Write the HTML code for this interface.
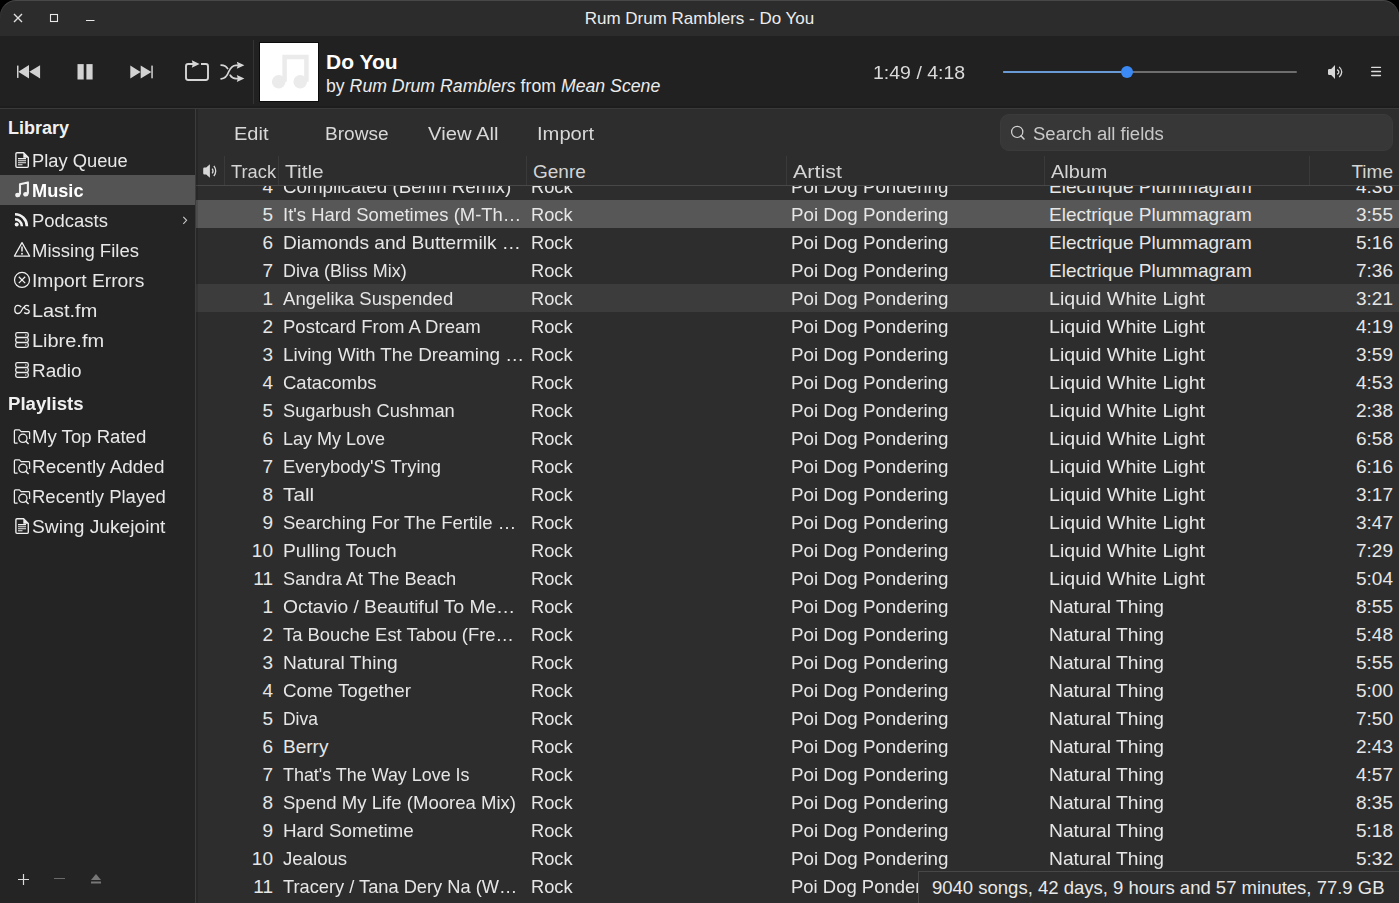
<!DOCTYPE html>
<html><head><meta charset="utf-8">
<style>
*{box-sizing:border-box;margin:0;padding:0}
html,body{width:1399px;height:903px;overflow:hidden;background:#000;font-family:"Liberation Sans",sans-serif;color:#e8e8e8}
#win{position:absolute;left:0;top:0;width:1399px;height:903px;background:#2d2d2d;border-radius:16px 16px 0 0;overflow:hidden}
#title{position:absolute;left:0;top:0;width:1399px;height:36px;background:#2c2c2c}
#tline{position:absolute;left:0;top:0;width:1399px;height:24px;border-top:1px solid #484848;border-left:1px solid #383838;border-right:1px solid #383838;border-radius:16px 16px 0 0;-webkit-mask-image:linear-gradient(#000 10px,transparent 20px)}
#title .t{position:absolute;left:0;width:1399px;top:9px;text-align:center;font-size:17px;color:#ececec}
#toolbar{position:absolute;left:0;top:36px;width:1399px;height:72px;background:#212121;border-bottom:2px solid #1d1d1d}
#tbline{position:absolute;left:0;top:108px;width:1399px;height:1px;background:#3a3a3a}
#side{position:absolute;left:0;top:109px;width:195px;height:794px;background:#242424}
#vsep{position:absolute;left:195px;top:109px;width:1px;height:794px;background:#3c3c3c}
.abs{position:absolute}
.sh{position:absolute;left:8px;margin-top:1px;font-weight:bold;font-size:18px;color:#f0f0f0}
.si{position:absolute;left:0;width:195px;height:30px}
.si .lbl{position:absolute;left:32px;top:6px;transform-origin:0 0;font-size:18px;color:#e8e8e8;white-space:nowrap}
.si svg{position:absolute;left:14px;top:7px}
.si.sel{background:#545454}
.si.sel .lbl{font-weight:bold;color:#fff}
#main{position:absolute;left:196px;top:109px;width:1203px;height:794px;background:#2d2d2d;overflow:hidden}
.btn{position:absolute;top:15px;font-size:18px;color:#d8d8d8;transform-origin:0 0}
#search{position:absolute;left:804px;top:5px;width:393px;height:37px;background:#373737;border:1px solid #3b3b3b;border-radius:9px}
#search .ph{position:absolute;left:32px;top:9px;font-size:18px;color:#c8c8c8}
#hdr{position:absolute;left:0;top:47px;width:1203px;height:30px;border-bottom:1px solid #484848}
.hs{position:absolute;top:0;width:1px;height:29px;background:#3a3a3a}
.hl{position:absolute;top:5px;font-size:19px;color:#d4d4d4;white-space:nowrap;transform-origin:0 0}
#list{position:absolute;left:196px;top:186px;width:1203px;height:717px;overflow:hidden}
.row{position:absolute;left:0;width:1203px;height:28px;font-size:19px;line-height:28px;white-space:nowrap;color:#e6e6e6}
#list .row{margin-top:-186px}
.row.sel{background:#575757}
.row.hov{background:#3c3c3c}
.c{position:absolute;top:1px;transform-origin:0 0}
.tr{left:0;width:77px;text-align:right}
.ti{left:87px}
.ge{left:335px}
.ar{left:595px}
.al{left:853px}
.tm{left:1100px;width:97px;text-align:right}
#status{position:absolute;left:918px;top:871px;width:481px;height:32px;background:#2d2d2d;border:1px solid #474747;border-right:none;border-bottom:none}
#status .t{position:absolute;left:13px;top:5px;font-size:18.5px;color:#e8e8e8;white-space:nowrap}
</style></head><body>
<div id="win">
 <div id="title">
  <svg class="abs" style="left:13px;top:13px" width="10" height="10" viewBox="0 0 10 10"><path d="M1 1L9 9M9 1L1 9" stroke="#e0e0e0" stroke-width="1.4"/></svg>
  <svg class="abs" style="left:49px;top:13px" width="10" height="10" viewBox="0 0 10 10"><rect x="1.5" y="1.5" width="7" height="7" fill="none" stroke="#e8e8e8" stroke-width="1.1"/></svg>
  <svg class="abs" style="left:85px;top:18px" width="10" height="4" viewBox="0 0 10 4"><path d="M1 2.5H9.5" stroke="#e8e8e8" stroke-width="1.1"/></svg>
  <div class="t">Rum Drum Ramblers - Do You</div>
  <div id="tline"></div>
 </div>
 <div id="toolbar">
  <!-- prev/pause/next -->
  <svg class="abs" style="left:10px;top:22px" width="150" height="30" viewBox="10 58 150 30">
   <rect x="17" y="65.6" width="1.5" height="12.3" fill="#d2d2d2"/>
   <path d="M18.3 71.8L29 65.1V78.6Z M29.3 71.8L40.1 65.2V78.4Z" fill="#d2d2d2"/>
   <rect x="77.5" y="64.1" width="6.2" height="15.4" fill="#d2d2d2"/>
   <rect x="86.4" y="64.1" width="6.2" height="15.4" fill="#d2d2d2"/>
   <path d="M130.3 65.6L140.6 72L130.3 78.4Z M140.7 65.6L151.4 72L140.7 78.4Z" fill="#d2d2d2"/>
   <rect x="151.3" y="65.6" width="1.5" height="12.7" fill="#d2d2d2"/>
  </svg>
  <!-- repeat + shuffle -->
  <svg class="abs" style="left:180px;top:19px" width="70" height="35" viewBox="180 55 70 35">
   <path d="M193.5 64H188.2Q186 64 186 66.2V77.8Q186 80 188.2 80H205.8Q208 80 208 77.8V66.2Q208 64 205.8 64H201" fill="none" stroke="#d6d6d6" stroke-width="1.9"/>
   <path d="M191.8 60.2L199.6 64L191.8 67.8L192.8 64Z" fill="#d6d6d6"/>
   <path d="M221.1 65.1Q225.6 65.1 227.6 68.6" fill="none" stroke="#d6d6d6" stroke-width="1.7" stroke-linecap="round"/>
   <path d="M221.1 78.8Q226.2 78.8 228.8 71.5Q231.5 65.3 236 65.3H239" fill="none" stroke="#d6d6d6" stroke-width="1.7" stroke-linecap="round"/>
   <path d="M230.2 75.2Q232.3 78.6 236 78.6H239" fill="none" stroke="#d6d6d6" stroke-width="1.7" stroke-linecap="round"/>
   <path d="M236.8 61.8L244.4 65.3L236.8 68.8L237.8 65.3Z M236.8 75.1L244.4 78.6L236.8 82.1L237.8 78.6Z" fill="#d6d6d6"/>
  </svg>
  <div class="abs" style="left:253px;top:4px;width:1px;height:64px;background:#343434"></div>
  <!-- art -->
  <div class="abs" style="left:259px;top:6px;width:60px;height:60px;background:#0c0c0c"></div>
  <div class="abs" style="left:260px;top:7px;width:58px;height:58px;background:#fff">
   <svg class="abs" style="left:0;top:0" width="58" height="58" viewBox="0 0 58 58"><path d="M24.6 38.8V13.9H46.4V38.8" fill="none" stroke="#ebebeb" stroke-width="4.5"/><circle cx="18.7" cy="38.8" r="6.8" fill="#ebebeb"/><circle cx="40.2" cy="38.8" r="6.8" fill="#ebebeb"/></svg>
  </div>
  <div class="abs" style="left:326px;top:14px;font-size:21px;font-weight:bold;color:#fff">Do You</div>
  <div class="abs" style="left:326px;top:40px;font-size:17.7px;color:#ececec;white-space:nowrap">by <i>Rum Drum Ramblers</i> from <i>Mean Scene</i></div>
  <div class="abs" style="left:873px;top:27px;font-size:18px;color:#dadada;transform:scaleX(1.084);transform-origin:0 0">1:49 / 4:18</div>
  <!-- slider -->
  <div class="abs" style="left:1003px;top:35px;width:294px;height:2px;background:#6e6e6e;border-radius:1px"></div>
  <div class="abs" style="left:1003px;top:35px;width:124px;height:2px;background:#6a9ad6;border-radius:1px"></div>
  <div class="abs" style="left:1121px;top:30px;width:12px;height:12px;background:#3a89f5;border-radius:6px"></div>
  <!-- volume -->
  <svg class="abs" style="left:1327px;top:28px" width="16" height="16" viewBox="0 0 16 16"><path d="M1 6.2Q1 4.9 2.3 4.9H4.2L8 1V15L4.2 11.1H2.3Q1 11.1 1 9.8Z" fill="#d6d6d6"/><path d="M10.2 5.6Q13.6 8 10.2 10.4M12.2 2.9Q17.2 8 12.2 13.1" fill="none" stroke="#d6d6d6" stroke-width="1.3"/></svg>
  <!-- menu -->
  <svg class="abs" style="left:1370px;top:30px" width="12" height="11" viewBox="0 0 12 11"><path d="M1.7 1.4H10.5M1.7 5.5H10.5M1.7 9.5H10.5" stroke="#dcdcdc" stroke-width="1.3" stroke-linecap="round"/></svg>
 </div>
 <div id="tbline"></div>
 <div id="side">
  <div class="sh" style="top:8px">Library</div>
  <div class="si" style="top:36px"><svg style="position:absolute;left:13px;top:6px" width="18" height="18" viewBox="0 0 18 18"><path d="M4 1.7H10.6L15.3 6.4V15.3Q15.3 16.3 14.3 16.3H4Q2.9 16.3 2.9 15.3V2.7Q2.9 1.7 4 1.7Z" fill="none" stroke="#f0f0f0" stroke-width="1.35" stroke-linejoin="round"/><path d="M10.3 1.7V6.7H15.3Z" fill="#f0f0f0"/><path d="M5 7.6H13M5 9.7H13M5 11.7H13M5 13.7H9.5" stroke="#f0f0f0" stroke-width="1.15"/></svg><span class="lbl" style="margin-top:0px;transform:scaleX(1.018)">Play Queue</span></div>
<div class="si sel" style="top:66px"><svg style="position:absolute;left:13px;top:6px" width="18" height="18" viewBox="0 0 18 18"><path d="M7 13.5V3.3L14.9 1.4V12.8" fill="none" stroke="#f0f0f0" stroke-width="2.1" stroke-linejoin="round"/><ellipse cx="4.8" cy="14" rx="2.6" ry="2.3" fill="#f0f0f0"/><ellipse cx="12.8" cy="13.2" rx="2.6" ry="2.3" fill="#f0f0f0"/></svg><span class="lbl" style="margin-top:0px;transform:scaleX(1.01)">Music</span></div>
<div class="si" style="top:96px"><svg style="position:absolute;left:13px;top:6px" width="18" height="18" viewBox="0 0 18 18"><circle cx="3.7" cy="13.6" r="2" fill="#f0f0f0"/><path d="M2 8.3A6.9 6.9 0 0 1 8.9 15.2M2 3.3A11.9 11.9 0 0 1 13.9 15.2" fill="none" stroke="#f0f0f0" stroke-width="2.6"/></svg><span class="lbl" style="margin-top:0px;transform:scaleX(1.026)">Podcasts</span><svg class="abs" style="left:182px;top:11px" width="6" height="9" viewBox="0 0 6 9"><path d="M1.3 0.8L4.6 4.3L1.3 7.8" fill="none" stroke="#c8c8c8" stroke-width="1.1"/></svg></div>
<div class="si" style="top:126px"><svg style="position:absolute;left:13px;top:6px" width="18" height="18" viewBox="0 0 18 18"><path d="M9 1.6L16.6 15.1H1.4Z" fill="none" stroke="#f0f0f0" stroke-width="1.25" stroke-linejoin="round"/><path d="M9 5.6V10.6" stroke="#f0f0f0" stroke-width="1.5"/><circle cx="9" cy="12.8" r="0.95" fill="#f0f0f0"/></svg><span class="lbl" style="margin-top:0px;transform:scaleX(1.028)">Missing Files</span></div>
<div class="si" style="top:156px"><svg style="position:absolute;left:13px;top:6px" width="18" height="18" viewBox="0 0 18 18"><circle cx="9" cy="8.9" r="7.5" fill="none" stroke="#f0f0f0" stroke-width="1.25"/><path d="M5.8 5.7L12.2 12.1M12.2 5.7L5.8 12.1" stroke="#f0f0f0" stroke-width="1.25"/></svg><span class="lbl" style="margin-top:0px;transform:scaleX(1.07)">Import Errors</span></div>
<div class="si" style="top:186px"><svg style="position:absolute;left:13px;top:6px" width="18" height="18" viewBox="0 0 18 18"><path d="M8.3 6.2Q7 4.3 5 4.3Q1.8 4.3 1.8 8.4Q1.8 12.5 5 12.5Q6.7 12.5 7.8 10.8L9.3 8.2Q10.3 6.3 11.8 6" fill="none" stroke="#f0f0f0" stroke-width="1.3"/><path d="M16 5.3Q15 4.3 13.6 4.3Q11.5 4.3 11.5 6.2Q11.5 7.8 13.6 8.3Q16.2 8.8 16.2 10.5Q16.2 12.5 13.6 12.5Q12.2 12.5 11.2 11.5" fill="none" stroke="#f0f0f0" stroke-width="1.3"/></svg><span class="lbl" style="margin-top:0px;transform:scaleX(1.105)">Last.fm</span></div>
<div class="si" style="top:216px"><svg style="position:absolute;left:13px;top:6px" width="18" height="18" viewBox="0 0 18 18"><rect x="2.7" y="1.7" width="12.6" height="4.6" rx="1.7" fill="none" stroke="#f0f0f0" stroke-width="1.25"/><rect x="2.7" y="6.7" width="12.6" height="4.6" rx="1.7" fill="none" stroke="#f0f0f0" stroke-width="1.25"/><rect x="2.7" y="11.7" width="12.6" height="4.6" rx="1.7" fill="none" stroke="#f0f0f0" stroke-width="1.25"/><path d="M12 4H13.5M12 9H13.5M12 14H13.5" stroke="#f0f0f0" stroke-width="1.1"/></svg><span class="lbl" style="margin-top:0px;transform:scaleX(1.108)">Libre.fm</span></div>
<div class="si" style="top:246px"><svg style="position:absolute;left:13px;top:6px" width="18" height="18" viewBox="0 0 18 18"><rect x="2.7" y="1.7" width="12.6" height="4.6" rx="1.7" fill="none" stroke="#f0f0f0" stroke-width="1.25"/><rect x="2.7" y="6.7" width="12.6" height="4.6" rx="1.7" fill="none" stroke="#f0f0f0" stroke-width="1.25"/><rect x="2.7" y="11.7" width="12.6" height="4.6" rx="1.7" fill="none" stroke="#f0f0f0" stroke-width="1.25"/><path d="M12 4H13.5M12 9H13.5M12 14H13.5" stroke="#f0f0f0" stroke-width="1.1"/></svg><span class="lbl" style="margin-top:0px;transform:scaleX(1.053)">Radio</span></div>
<div class="si" style="top:312px"><svg style="position:absolute;left:13px;top:6px" width="18" height="18" viewBox="0 0 18 18"><path d="M4.6 16.2H2.4Q1.4 16.2 1.4 15.2V3.9Q1.4 2.9 2.4 2.9H6.4L8.2 4.6H15.6Q16.6 4.6 16.6 5.6V12" fill="none" stroke="#f0f0f0" stroke-width="1.25" stroke-linejoin="round"/><circle cx="9.9" cy="11.3" r="4.1" fill="none" stroke="#f0f0f0" stroke-width="1.3"/><path d="M12.8 14.2L15.6 17" stroke="#f0f0f0" stroke-width="1.5"/></svg><span class="lbl" style="margin-top:0px;transform:scaleX(1.032)">My Top Rated</span></div>
<div class="si" style="top:342px"><svg style="position:absolute;left:13px;top:6px" width="18" height="18" viewBox="0 0 18 18"><path d="M4.6 16.2H2.4Q1.4 16.2 1.4 15.2V3.9Q1.4 2.9 2.4 2.9H6.4L8.2 4.6H15.6Q16.6 4.6 16.6 5.6V12" fill="none" stroke="#f0f0f0" stroke-width="1.25" stroke-linejoin="round"/><circle cx="9.9" cy="11.3" r="4.1" fill="none" stroke="#f0f0f0" stroke-width="1.3"/><path d="M12.8 14.2L15.6 17" stroke="#f0f0f0" stroke-width="1.5"/></svg><span class="lbl" style="margin-top:0px;transform:scaleX(1.05)">Recently Added</span></div>
<div class="si" style="top:372px"><svg style="position:absolute;left:13px;top:6px" width="18" height="18" viewBox="0 0 18 18"><path d="M4.6 16.2H2.4Q1.4 16.2 1.4 15.2V3.9Q1.4 2.9 2.4 2.9H6.4L8.2 4.6H15.6Q16.6 4.6 16.6 5.6V12" fill="none" stroke="#f0f0f0" stroke-width="1.25" stroke-linejoin="round"/><circle cx="9.9" cy="11.3" r="4.1" fill="none" stroke="#f0f0f0" stroke-width="1.3"/><path d="M12.8 14.2L15.6 17" stroke="#f0f0f0" stroke-width="1.5"/></svg><span class="lbl" style="margin-top:0px;transform:scaleX(1.028)">Recently Played</span></div>
<div class="si" style="top:402px"><svg style="position:absolute;left:13px;top:6px" width="18" height="18" viewBox="0 0 18 18"><path d="M4 1.7H10.6L15.3 6.4V15.3Q15.3 16.3 14.3 16.3H4Q2.9 16.3 2.9 15.3V2.7Q2.9 1.7 4 1.7Z" fill="none" stroke="#f0f0f0" stroke-width="1.35" stroke-linejoin="round"/><path d="M10.3 1.7V6.7H15.3Z" fill="#f0f0f0"/><path d="M5 7.6H13M5 9.7H13M5 11.7H13M5 13.7H9.5" stroke="#f0f0f0" stroke-width="1.15"/></svg><span class="lbl" style="margin-top:0px;transform:scaleX(1.067)">Swing Jukejoint</span></div>
  <div class="sh" style="top:284px;transform:scaleX(1.035);transform-origin:0 0">Playlists</div>
  <svg class="abs" style="left:17px;top:764px" width="13" height="13" viewBox="0 0 13 13"><path d="M6.5 1V12M1 6.5H12" stroke="#dcdcdc" stroke-width="1.2"/></svg>
  <div class="abs" style="left:54px;top:769px;width:11px;height:1px;background:#6a6a6a"></div>
  <svg class="abs" style="left:90px;top:764px" width="12" height="12" viewBox="0 0 12 12"><path d="M6 1L11 7H1Z" fill="#777"/><rect x="1" y="8.5" width="10" height="2" fill="#777"/></svg>
 </div>
 <div id="vsep"></div>
 <div id="main">
  <div class="btn" style="left:38px;transform:scaleX(1.113)">Edit</div>
  <div class="btn" style="left:128.5px;transform:scaleX(1.058)">Browse</div>
  <div class="btn" style="left:232px;transform:scaleX(1.125)">View All</div>
  <div class="btn" style="left:341px;transform:scaleX(1.12)">Import</div>
  <div id="search">
   <svg class="abs" style="left:9px;top:10px" width="15" height="15" viewBox="0 0 15 15"><circle cx="7.2" cy="6.9" r="5.6" fill="none" stroke="#d4d4d4" stroke-width="1.2"/><path d="M11.1 10.9L14 13.9" stroke="#d4d4d4" stroke-width="1.5" stroke-linecap="round"/></svg>
   <div class="ph" style="transform:scaleX(1.03);transform-origin:0 0">Search all fields</div>
  </div>
  <div id="hdr">
   <svg class="abs" style="left:7px;top:8px" width="16" height="15" viewBox="0 0 16 15"><path d="M0.2 4.8Q0.2 3.6 1.4 3.6H3.2L6.9 0.2V13.8L3.2 10.4H1.4Q0.2 10.4 0.2 9.2Z" fill="#d8d8d8"/><path d="M9.2 4.6Q10.9 7 9.2 9.4M10.9 1.9Q14.5 7 10.9 12.1" fill="none" stroke="#d8d8d8" stroke-width="1.3"/></svg>
   <div class="hs" style="left:28px"></div>
   <div class="hl" style="left:35px;transform:scaleX(0.962)">Track</div>
   <div class="hs" style="left:82px"></div>
   <div class="hl" style="left:89px;transform:scaleX(1.1)">Title</div>
   <div class="hs" style="left:330px"></div>
   <div class="hl" style="left:337px">Genre</div>
   <div class="hs" style="left:590px"></div>
   <div class="hl" style="left:597px;transform:scaleX(1.13)">Artist</div>
   <div class="hs" style="left:848px"></div>
   <div class="hl" style="left:855px;transform:scaleX(1.047)">Album</div>
   <div class="hs" style="left:1113px"></div>
   <div class="hl" style="left:1100px;width:97px;text-align:right">Time</div>
  </div>
 </div>
 <div id="list">
<div class="row" style="top:172px"><span class="c tr">4</span><span class="c ti" style="transform:scaleX(0.9869)">Complicated (Berlin Remix)</span><span class="c ge" style="transform:scaleX(0.96)">Rock</span><span class="c ar" style="transform:scaleX(0.987)">Poi Dog Pondering</span><span class="c al" style="transform:scaleX(1.0000)">Electrique Plummagram</span><span class="c tm">4:36</span></div>
<div class="row sel" style="top:200px"><span class="c tr">5</span><span class="c ti" style="transform:scaleX(0.9711)">It's Hard Sometimes (M-Th…</span><span class="c ge" style="transform:scaleX(0.96)">Rock</span><span class="c ar" style="transform:scaleX(0.987)">Poi Dog Pondering</span><span class="c al" style="transform:scaleX(1.0000)">Electrique Plummagram</span><span class="c tm">3:55</span></div>
<div class="row" style="top:228px"><span class="c tr">6</span><span class="c ti" style="transform:scaleX(1.0060)">Diamonds and Buttermilk …</span><span class="c ge" style="transform:scaleX(0.96)">Rock</span><span class="c ar" style="transform:scaleX(0.987)">Poi Dog Pondering</span><span class="c al" style="transform:scaleX(1.0000)">Electrique Plummagram</span><span class="c tm">5:16</span></div>
<div class="row" style="top:256px"><span class="c tr">7</span><span class="c ti" style="transform:scaleX(0.9457)">Diva (Bliss Mix)</span><span class="c ge" style="transform:scaleX(0.96)">Rock</span><span class="c ar" style="transform:scaleX(0.987)">Poi Dog Pondering</span><span class="c al" style="transform:scaleX(1.0000)">Electrique Plummagram</span><span class="c tm">7:36</span></div>
<div class="row hov" style="top:284px"><span class="c tr">1</span><span class="c ti" style="transform:scaleX(0.9767)">Angelika Suspended</span><span class="c ge" style="transform:scaleX(0.96)">Rock</span><span class="c ar" style="transform:scaleX(0.987)">Poi Dog Pondering</span><span class="c al" style="transform:scaleX(1.0333)">Liquid White Light</span><span class="c tm">3:21</span></div>
<div class="row" style="top:312px"><span class="c tr">2</span><span class="c ti" style="transform:scaleX(0.9751)">Postcard From A Dream</span><span class="c ge" style="transform:scaleX(0.96)">Rock</span><span class="c ar" style="transform:scaleX(0.987)">Poi Dog Pondering</span><span class="c al" style="transform:scaleX(1.0333)">Liquid White Light</span><span class="c tm">4:19</span></div>
<div class="row" style="top:340px"><span class="c tr">3</span><span class="c ti" style="transform:scaleX(0.9946)">Living With The Dreaming …</span><span class="c ge" style="transform:scaleX(0.96)">Rock</span><span class="c ar" style="transform:scaleX(0.987)">Poi Dog Pondering</span><span class="c al" style="transform:scaleX(1.0333)">Liquid White Light</span><span class="c tm">3:59</span></div>
<div class="row" style="top:368px"><span class="c tr">4</span><span class="c ti" style="transform:scaleX(0.9734)">Catacombs</span><span class="c ge" style="transform:scaleX(0.96)">Rock</span><span class="c ar" style="transform:scaleX(0.987)">Poi Dog Pondering</span><span class="c al" style="transform:scaleX(1.0333)">Liquid White Light</span><span class="c tm">4:53</span></div>
<div class="row" style="top:396px"><span class="c tr">5</span><span class="c ti" style="transform:scaleX(0.9621)">Sugarbush Cushman</span><span class="c ge" style="transform:scaleX(0.96)">Rock</span><span class="c ar" style="transform:scaleX(0.987)">Poi Dog Pondering</span><span class="c al" style="transform:scaleX(1.0333)">Liquid White Light</span><span class="c tm">2:38</span></div>
<div class="row" style="top:424px"><span class="c tr">6</span><span class="c ti" style="transform:scaleX(0.9481)">Lay My Love</span><span class="c ge" style="transform:scaleX(0.96)">Rock</span><span class="c ar" style="transform:scaleX(0.987)">Poi Dog Pondering</span><span class="c al" style="transform:scaleX(1.0333)">Liquid White Light</span><span class="c tm">6:58</span></div>
<div class="row" style="top:452px"><span class="c tr">7</span><span class="c ti" style="transform:scaleX(0.9689)">Everybody'S Trying</span><span class="c ge" style="transform:scaleX(0.96)">Rock</span><span class="c ar" style="transform:scaleX(0.987)">Poi Dog Pondering</span><span class="c al" style="transform:scaleX(1.0333)">Liquid White Light</span><span class="c tm">6:16</span></div>
<div class="row" style="top:480px"><span class="c tr">8</span><span class="c ti" style="transform:scaleX(1.0923)">Tall</span><span class="c ge" style="transform:scaleX(0.96)">Rock</span><span class="c ar" style="transform:scaleX(0.987)">Poi Dog Pondering</span><span class="c al" style="transform:scaleX(1.0333)">Liquid White Light</span><span class="c tm">3:17</span></div>
<div class="row" style="top:508px"><span class="c tr">9</span><span class="c ti" style="transform:scaleX(0.9746)">Searching For The Fertile …</span><span class="c ge" style="transform:scaleX(0.96)">Rock</span><span class="c ar" style="transform:scaleX(0.987)">Poi Dog Pondering</span><span class="c al" style="transform:scaleX(1.0333)">Liquid White Light</span><span class="c tm">3:47</span></div>
<div class="row" style="top:536px"><span class="c tr">10</span><span class="c ti" style="transform:scaleX(1.0090)">Pulling Touch</span><span class="c ge" style="transform:scaleX(0.96)">Rock</span><span class="c ar" style="transform:scaleX(0.987)">Poi Dog Pondering</span><span class="c al" style="transform:scaleX(1.0333)">Liquid White Light</span><span class="c tm">7:29</span></div>
<div class="row" style="top:564px"><span class="c tr">11</span><span class="c ti" style="transform:scaleX(0.9607)">Sandra At The Beach</span><span class="c ge" style="transform:scaleX(0.96)">Rock</span><span class="c ar" style="transform:scaleX(0.987)">Poi Dog Pondering</span><span class="c al" style="transform:scaleX(1.0333)">Liquid White Light</span><span class="c tm">5:04</span></div>
<div class="row" style="top:592px"><span class="c tr">1</span><span class="c ti" style="transform:scaleX(1.0106)">Octavio / Beautiful To Me…</span><span class="c ge" style="transform:scaleX(0.96)">Rock</span><span class="c ar" style="transform:scaleX(0.987)">Poi Dog Pondering</span><span class="c al" style="transform:scaleX(1.0116)">Natural Thing</span><span class="c tm">8:55</span></div>
<div class="row" style="top:620px"><span class="c tr">2</span><span class="c ti" style="transform:scaleX(0.9689)">Ta Bouche Est Tabou (Fre…</span><span class="c ge" style="transform:scaleX(0.96)">Rock</span><span class="c ar" style="transform:scaleX(0.987)">Poi Dog Pondering</span><span class="c al" style="transform:scaleX(1.0116)">Natural Thing</span><span class="c tm">5:48</span></div>
<div class="row" style="top:648px"><span class="c tr">3</span><span class="c ti" style="transform:scaleX(1.0089)">Natural Thing</span><span class="c ge" style="transform:scaleX(0.96)">Rock</span><span class="c ar" style="transform:scaleX(0.987)">Poi Dog Pondering</span><span class="c al" style="transform:scaleX(1.0116)">Natural Thing</span><span class="c tm">5:55</span></div>
<div class="row" style="top:676px"><span class="c tr">4</span><span class="c ti" style="transform:scaleX(0.9875)">Come Together</span><span class="c ge" style="transform:scaleX(0.96)">Rock</span><span class="c ar" style="transform:scaleX(0.987)">Poi Dog Pondering</span><span class="c al" style="transform:scaleX(1.0116)">Natural Thing</span><span class="c tm">5:00</span></div>
<div class="row" style="top:704px"><span class="c tr">5</span><span class="c ti" style="transform:scaleX(0.9189)">Diva</span><span class="c ge" style="transform:scaleX(0.96)">Rock</span><span class="c ar" style="transform:scaleX(0.987)">Poi Dog Pondering</span><span class="c al" style="transform:scaleX(1.0116)">Natural Thing</span><span class="c tm">7:50</span></div>
<div class="row" style="top:732px"><span class="c tr">6</span><span class="c ti" style="transform:scaleX(1.0000)">Berry</span><span class="c ge" style="transform:scaleX(0.96)">Rock</span><span class="c ar" style="transform:scaleX(0.987)">Poi Dog Pondering</span><span class="c al" style="transform:scaleX(1.0116)">Natural Thing</span><span class="c tm">2:43</span></div>
<div class="row" style="top:760px"><span class="c tr">7</span><span class="c ti" style="transform:scaleX(0.9423)">That's The Way Love Is</span><span class="c ge" style="transform:scaleX(0.96)">Rock</span><span class="c ar" style="transform:scaleX(0.987)">Poi Dog Pondering</span><span class="c al" style="transform:scaleX(1.0116)">Natural Thing</span><span class="c tm">4:57</span></div>
<div class="row" style="top:788px"><span class="c tr">8</span><span class="c ti" style="transform:scaleX(0.9764)">Spend My Life (Moorea Mix)</span><span class="c ge" style="transform:scaleX(0.96)">Rock</span><span class="c ar" style="transform:scaleX(0.987)">Poi Dog Pondering</span><span class="c al" style="transform:scaleX(1.0116)">Natural Thing</span><span class="c tm">8:35</span></div>
<div class="row" style="top:816px"><span class="c tr">9</span><span class="c ti" style="transform:scaleX(0.9908)">Hard Sometime</span><span class="c ge" style="transform:scaleX(0.96)">Rock</span><span class="c ar" style="transform:scaleX(0.987)">Poi Dog Pondering</span><span class="c al" style="transform:scaleX(1.0116)">Natural Thing</span><span class="c tm">5:18</span></div>
<div class="row" style="top:844px"><span class="c tr">10</span><span class="c ti" style="transform:scaleX(0.9797)">Jealous</span><span class="c ge" style="transform:scaleX(0.96)">Rock</span><span class="c ar" style="transform:scaleX(0.987)">Poi Dog Pondering</span><span class="c al" style="transform:scaleX(1.0116)">Natural Thing</span><span class="c tm">5:32</span></div>
<div class="row" style="top:872px"><span class="c tr">11</span><span class="c ti" style="transform:scaleX(0.9602)">Tracery / Tana Dery Na (W…</span><span class="c ge" style="transform:scaleX(0.96)">Rock</span><span class="c ar" style="transform:scaleX(0.972)">Poi Dog Pondering</span><span class="c al" style="transform:scaleX(1.0116)">Natural Thing</span><span class="c tm">5:10</span></div>
 </div>
 <div class="abs" style="left:196px;top:109px;width:2px;height:794px;background:rgba(0,0,0,0.12)"></div>
 <div id="status"><div class="t">9040 songs, 42 days, 9 hours and 57 minutes, 77.9 GB</div></div>
</div>
</body></html>
